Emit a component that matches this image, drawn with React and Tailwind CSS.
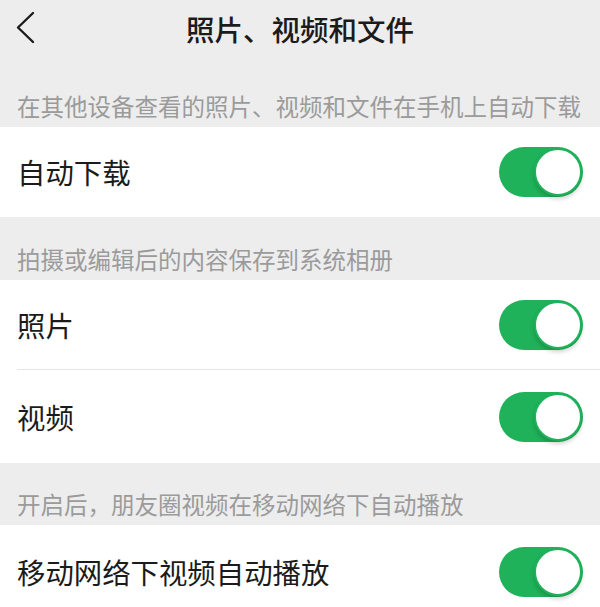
const font = { fontFamily: '"Noto Sans CJK SC", "Noto Sans", sans-serif' };

function Toggle() {
  return (
    <div className="relative w-[84px] h-[50px] rounded-full bg-[#1fb25a] shrink-0">
      <div className="absolute right-[1px] top-[1px] w-[48px] h-[48px] rounded-full bg-white border-[2px] border-[#1fb25a] shadow-[0_3px_4px_rgba(0,0,0,0.18)]" />
    </div>
  );
}

function SectionLabel({ children, height }) {
  return (
    <div className={`flex items-end px-[17px] pb-[9px] ${height}`}>
      <span className="text-[23.5px] leading-[24px] text-[#9b9b9b] whitespace-nowrap">{children}</span>
    </div>
  );
}

function Row({ label, height, divider }) {
  return (
    <div className={`relative flex items-center justify-between bg-white pl-[17px] pr-[17px] ${height}`}>
      <span className="text-[28.4px] leading-[30px] text-[#1b1b1b]">{label}</span>
      <Toggle />
      {divider && <div className="absolute bottom-0 left-[17px] right-0 h-px bg-[#e6e6e6]" />}
    </div>
  );
}

export default function App() {
  return (
    <div className="w-[600px] h-[607px] overflow-hidden bg-[#ededed]" style={font}>
      <div className="relative h-[58px] flex items-center justify-center">
        <svg className="absolute left-[13px] top-[10px]" width="24" height="36" viewBox="0 0 24 36" fill="none">
          <polyline points="20,3 5,17.5 20,32" stroke="#1b1b1b" strokeWidth="2.4" strokeLinecap="round" strokeLinejoin="round" />
        </svg>
        <span className="text-[28.5px] leading-[30px] font-medium text-[#1b1b1b]">照片、视频和文件</span>
      </div>

      <SectionLabel height="h-[69px]">在其他设备查看的照片、视频和文件在手机上自动下载</SectionLabel>
      <Row label="自动下载" height="h-[90px]" />

      <SectionLabel height="h-[63px]">拍摄或编辑后的内容保存到系统相册</SectionLabel>
      <Row label="照片" height="h-[90px]" divider />
      <Row label="视频" height="h-[93px]" />

      <SectionLabel height="h-[62px]">开启后，朋友圈视频在移动网络下自动播放</SectionLabel>
      <Row label="移动网络下视频自动播放" height="h-[94px]" />
    </div>
  );
}
